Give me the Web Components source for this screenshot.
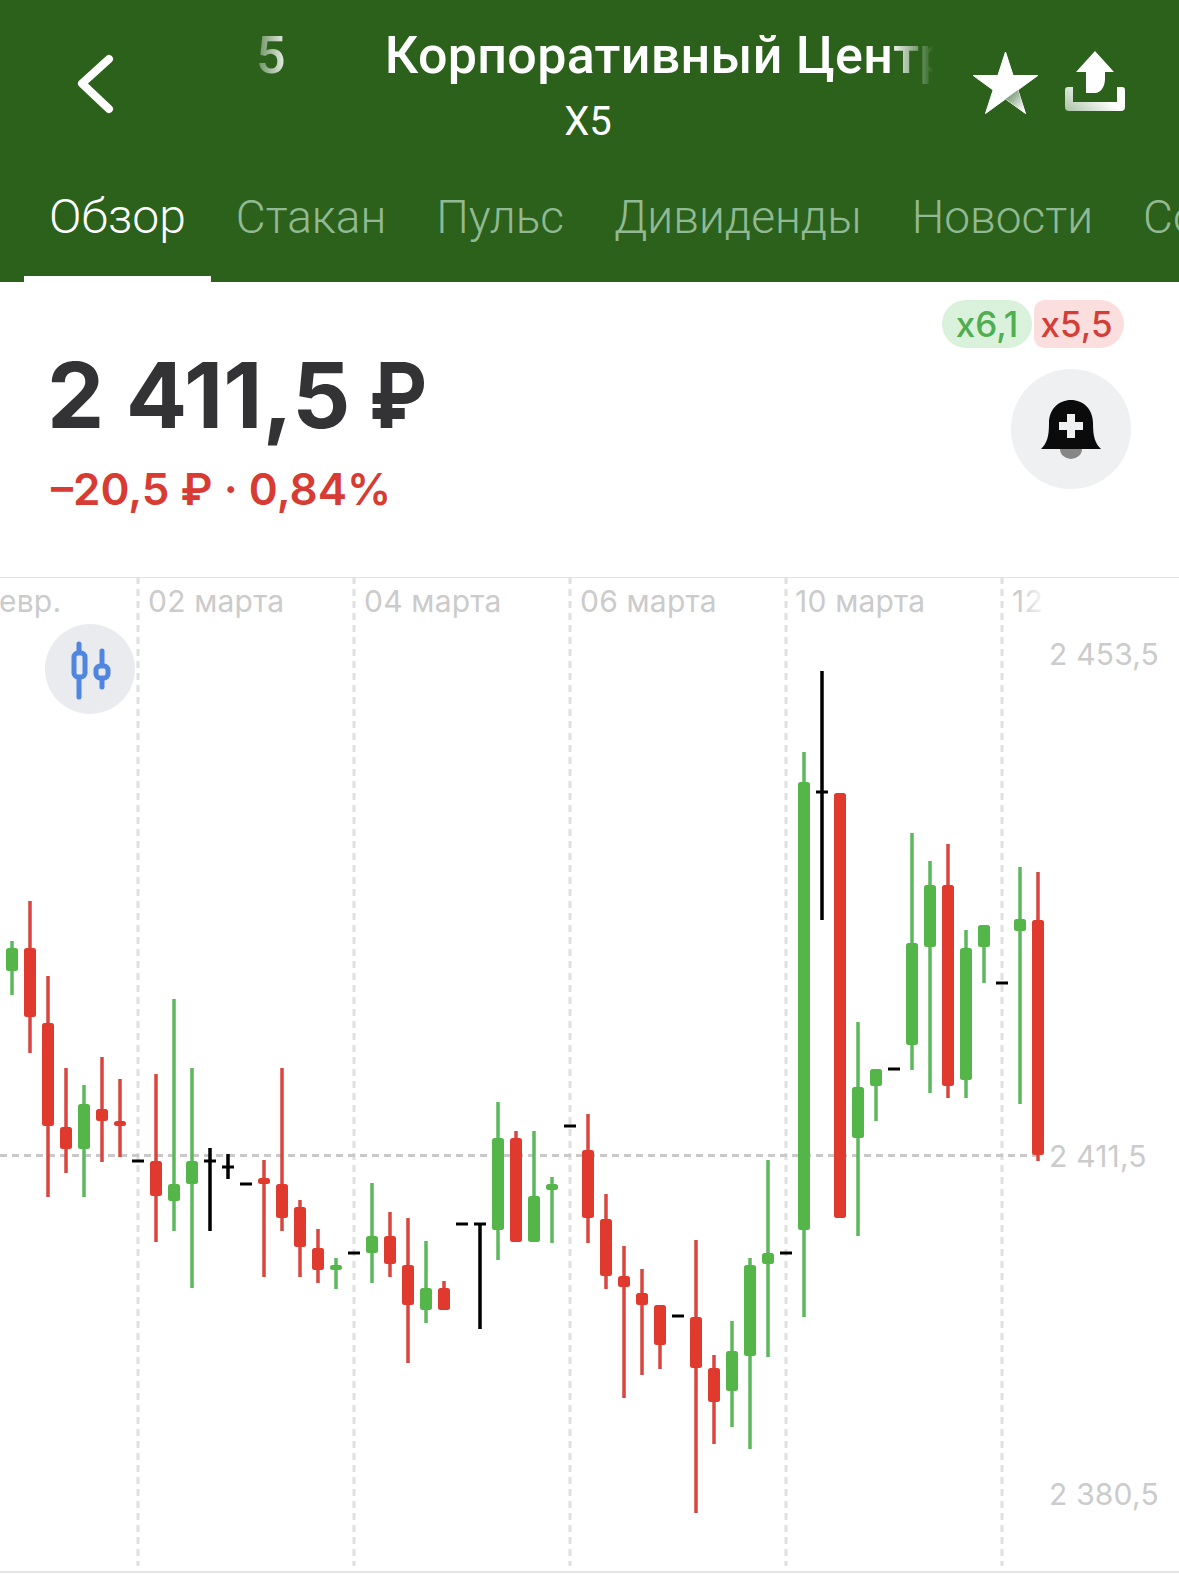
<!DOCTYPE html>
<html lang="ru">
<head>
<meta charset="utf-8">
<title>X5</title>
<style>
    html, body { margin: 0; padding: 0; background: #fff; }
    body { width: 1179px; height: 1575px; overflow: hidden; font-family: Inter, "Noto Sans", sans-serif; }
</style>
</head>
<body>
<stock-screen>
    <stock-header title-text="Корпоративный Центр" ticker="Х5" tail="5"></stock-header>
    <stock-quote price="2 411,5" currency="₽" change="–20,5 ₽ · 0,84%" buy="x6,1" sell="x5,5"></stock-quote>
    <candle-chart></candle-chart>
</stock-screen>

<script>
class StockScreen extends HTMLElement {
    constructor() {
        super();
        this.attachShadow({ mode: 'open' }).innerHTML = `
            <style>
                :host { display: flex; flex-direction: column; width: 1179px; height: 1575px; background: #fff; }
            </style>
            <slot></slot>
        `;
    }
}

const headerTemplate = document.createElement('template');
headerTemplate.innerHTML = `
    <style>
        :host {
            display: block;
            height: 282px;
            background: #2b611b;
            color: #fff;
            font-family: Roboto, sans-serif;
            overflow: hidden;
        }
        .top {
            display: flex;
            align-items: flex-start;
            height: 176px;
        }
        .back { width: 230px; flex: none; }
        .back svg { display: block; margin: 48px 0 0 72px; }
        .middle { width: 706px; flex: none; display: flex; flex-direction: column; }
        .marquee {
            display: flex;
            gap: 99px;
            padding: 27px 0 0 26px;
            height: 58px;
            font-size: 52px;
            letter-spacing: 0.3px;
            line-height: 58px;
            font-weight: 500;
            white-space: nowrap;
            overflow: hidden;
            -webkit-mask-image: linear-gradient(90deg, transparent 14px, #000 60px, #000 660px, transparent 704px);
            mask-image: linear-gradient(90deg, transparent 14px, #000 60px, #000 660px, transparent 704px);
        }
        .ticker {
            text-align: center;
            font-size: 40px;
            line-height: 44px;
            margin: 15px 0 0 0;
            padding-left: 10px;
        }
        .actions { display: flex; gap: 23px; padding: 48px 0 0 35px; }
        .actions svg { display: block; }
        .tabs {
            display: flex;
            gap: 50px;
            padding: 0 0 0 24px;
            height: 106px;
            white-space: nowrap;
            font-size: 46px;
            font-weight: 300;
        }
        .tab {
            color: #92b993;
            line-height: 70px;
            padding-top: 6px;
            height: 100px;
        }
        .tab.on {
            color: #fff;
            font-size: 48px;
            padding: 6px 25px 0 25px;
            margin-right: -25px;
            border-bottom: 6px solid #fff;
            height: 94px;
        }
    </style>
    <div class="top">
        <div class="back">
            <svg width="50" height="70" viewBox="0 0 50 70"><path d="M37 11 L10 35.5 L37 61" fill="none" stroke="#fff" stroke-width="8" stroke-linecap="round" stroke-linejoin="round"/></svg>
        </div>
        <div class="middle">
            <div class="marquee"><span class="tail"></span><span class="name"></span></div>
            <div class="ticker"></div>
        </div>
        <div class="actions">
            <svg width="70" height="70" viewBox="0 0 70 70">
                <defs><linearGradient id="starFade" gradientUnits="userSpaceOnUse" x1="37" y1="49" x2="52" y2="63"><stop offset="0" stop-color="#7fa07c"/><stop offset="1" stop-color="#fff"/></linearGradient></defs>
                <path d="M34.5 4 L42.1 27.5 L66.8 27.5 L46.9 42 L54.5 65.5 L34.5 51 L14.5 65.5 L22.1 42 L2.2 27.5 L26.9 27.5 Z" fill="#fff" stroke="#fff" stroke-width="1" stroke-linejoin="round"/>
                <path d="M34.5 51 L46.9 42 L54.5 65.5 Z" fill="url(#starFade)"/>
            </svg>
            <svg width="62" height="64" viewBox="0 0 62 64">
                <defs><linearGradient id="trayFade" x1="0" y1="1" x2="0.75" y2="0.6"><stop offset="0" stop-color="#a9c2a5"/><stop offset="1" stop-color="#fff"/></linearGradient></defs>
                <path d="M31 3 L50 24 L41 24 L41 31 C41 38 37 45 31 45 L22 45 L22 24 L12 24 Z" fill="#fff"/>
                <path d="M1 42 Q1 39 4 39 L9 39 L9 54 L53 54 L53 39 L58 39 Q61 39 61 42 L61 59 Q61 63 57 63 L5 63 Q1 63 1 59 Z" fill="url(#trayFade)"/>
            </svg>
        </div>
    </div>
    <div class="tabs">
        <div class="tab on">Обзор</div>
        <div class="tab">Стакан</div>
        <div class="tab">Пульс</div>
        <div class="tab">Дивиденды</div>
        <div class="tab">Новости</div>
        <div class="tab">События</div>
    </div>
`;

class StockHeader extends HTMLElement {
    constructor() {
        super();
        this._shadowRoot = this.attachShadow({ mode: 'open' });
        this._shadowRoot.appendChild(headerTemplate.content.cloneNode(true));
    }

    connectedCallback() {
        this._shadowRoot.querySelector('.tail').textContent = this.getAttribute('tail');
        this._shadowRoot.querySelector('.name').textContent = this.getAttribute('title-text');
        this._shadowRoot.querySelector('.ticker').textContent = this.getAttribute('ticker');
    }
}

const quoteTemplate = document.createElement('template');
quoteTemplate.innerHTML = `
    <style>
        :host {
            display: flex;
            justify-content: space-between;
            height: 295px;
            box-sizing: border-box;
            padding: 18px 48px 0 47px;
            font-family: Inter, sans-serif;
        }
        .price {
            display: flex;
            align-items: baseline;
            gap: 19px;
            font-size: 91px;
            line-height: 106px;
            font-weight: 700;
            color: #333335;
            margin-top: 42px;
            white-space: nowrap;
        }
        .currency { display: inline-block; transform: scaleX(0.86); transform-origin: left; }
        .change {
            font-size: 44px;
            line-height: 50px;
            font-weight: 600;
            color: #d83b33;
            margin: 16px 0 0 4px;
            white-space: nowrap;
        }
        .side { display: flex; flex-direction: column; align-items: flex-end; }
        .pills { display: flex; gap: 2px; margin-right: 7px; }
        .pill {
            width: 90px;
            height: 48px;
            display: flex;
            align-items: center;
            justify-content: center;
            font-size: 35px;
            font-weight: 500;
            border-radius: 24px;
        }
        .buy { background: #daf1dc; color: #4fae50; position: relative; box-shadow: 0 0 0 2px #fff; }
        .sell {
            background: #fbdfdf;
            color: #d33f38;
            border-radius: 10px 24px 24px 10px;
            box-sizing: border-box;
            padding-right: 5px;
        }
        .bell {
            width: 120px;
            height: 120px;
            margin-top: 21px;
            border-radius: 50%;
            background: #eff0f2;
            display: flex;
            align-items: center;
            justify-content: center;
        }
        .bell svg { display: block; }
    </style>
    <div class="info">
        <div class="price"><span class="value"></span><span class="currency"></span></div>
        <div class="change"></div>
    </div>
    <div class="side">
        <div class="pills"><div class="pill buy"></div><div class="pill sell"></div></div>
        <div class="bell">
            <svg width="60" height="60" viewBox="0 0 60 60">
                <path d="M19 50 A11 10 0 0 0 41 50 Z" fill="#868686"/>
                <path d="M0 50 C6 44 8 38 8 24 C8 10 18 1 30 1 C42 1 52 10 52 24 C52 38 54 44 60 50 Z" fill="#0b0b0b"/>
                <path d="M26 15 H34 V23 H42 V31 H34 V39 H26 V31 H18 V23 H26 Z" fill="#eff0f2"/>
            </svg>
        </div>
    </div>
`;

class StockQuote extends HTMLElement {
    constructor() {
        super();
        this._shadowRoot = this.attachShadow({ mode: 'open' });
        this._shadowRoot.appendChild(quoteTemplate.content.cloneNode(true));
    }

    connectedCallback() {
        this._shadowRoot.querySelector('.value').textContent = this.getAttribute('price');
        this._shadowRoot.querySelector('.currency').textContent = this.getAttribute('currency');
        this._shadowRoot.querySelector('.change').textContent = this.getAttribute('change');
        this._shadowRoot.querySelector('.buy').textContent = this.getAttribute('buy');
        this._shadowRoot.querySelector('.sell').textContent = this.getAttribute('sell');
    }
}

// x, wick top, wick bottom, body top, body bottom, kind
const CANDLES = [
    [12, 941, 995, 948, 971, 'g'],
    [30, 901, 1053, 948, 1017, 'r'],
    [48, 976, 1197, 1023, 1126, 'r'],
    [66, 1068, 1173, 1127, 1149, 'r'],
    [84, 1085, 1197, 1104, 1149, 'g'],
    [102, 1057, 1162, 1109, 1121, 'r'],
    [120, 1079, 1157, 1121, 1126, 'r'],
    [156, 1074, 1242, 1161, 1196, 'r'],
    [174, 999, 1231, 1184, 1201, 'g'],
    [192, 1068, 1288, 1161, 1184, 'g'],
    [264, 1160, 1277, 1178, 1184, 'r'],
    [282, 1068, 1231, 1184, 1218, 'r'],
    [300, 1200, 1277, 1207, 1247, 'r'],
    [318, 1229, 1283, 1248, 1270, 'r'],
    [336, 1258, 1289, 1265, 1270, 'g'],
    [372, 1183, 1283, 1236, 1253, 'g'],
    [390, 1212, 1277, 1236, 1264, 'r'],
    [408, 1218, 1363, 1265, 1305, 'r'],
    [426, 1241, 1323, 1288, 1310, 'g'],
    [444, 1281, 1310, 1288, 1310, 'r'],
    [498, 1102, 1260, 1138, 1230, 'g'],
    [516, 1131, 1242, 1138, 1242, 'r'],
    [534, 1131, 1242, 1196, 1242, 'g'],
    [552, 1177, 1243, 1184, 1190, 'g'],
    [588, 1114, 1243, 1150, 1218, 'r'],
    [606, 1194, 1289, 1219, 1276, 'r'],
    [624, 1246, 1398, 1276, 1287, 'r'],
    [642, 1269, 1375, 1293, 1305, 'r'],
    [660, 1305, 1369, 1305, 1345, 'r'],
    [696, 1240, 1513, 1317, 1368, 'r'],
    [714, 1355, 1444, 1368, 1402, 'r'],
    [732, 1321, 1427, 1351, 1391, 'g'],
    [750, 1258, 1449, 1265, 1356, 'g'],
    [768, 1160, 1357, 1253, 1264, 'g'],
    [804, 752, 1317, 782, 1230, 'g'],
    [840, 793, 1218, 793, 1218, 'r'],
    [858, 1022, 1236, 1087, 1138, 'g'],
    [876, 1069, 1121, 1069, 1086, 'g'],
    [912, 833, 1070, 943, 1045, 'g'],
    [930, 861, 1093, 885, 947, 'g'],
    [948, 844, 1098, 885, 1086, 'r'],
    [966, 930, 1098, 948, 1080, 'g'],
    [984, 925, 983, 925, 947, 'g'],
    [1020, 867, 1104, 919, 931, 'g'],
    [1038, 872, 1161, 920, 1155, 'r'],
];

const DOJIS = [
    [138, 1161], [210, 1161, 1148, 1231], [228, 1167, 1154, 1179], [246, 1184],
    [354, 1253], [462, 1224], [480, 1224, 1224, 1329], [570, 1126], [678, 1316],
    [786, 1253], [822, 792, 671, 920], [894, 1069], [1002, 983],
];

const GRID_X = [138, 354, 570, 786, 1002];
const DATES = [[-1, 'евр.'], [148, '02 марта'], [364, '04 марта'], [580, '06 марта'], [795, '10 марта']];
const PRICES = [[665, '2 453,5'], [1167, '2 411,5'], [1505, '2 380,5']];
const WICK = { g: '#5cb85c', r: '#d9453f' };
const BODY = { g: '#54b548', r: '#e03a2f' };

class CandleChart extends HTMLElement {
    constructor() {
        super();
        this.attachShadow({ mode: 'open' }).innerHTML = `
            <style>
                :host { display: block; position: relative; height: 998px; overflow: hidden; }
                svg.plot { display: block; }
                text { font-family: Inter, sans-serif; font-size: 30px; letter-spacing: 0.2px; fill: #cbcbcb; }
                .mode {
                    position: absolute;
                    left: 45px;
                    top: 47px;
                    width: 90px;
                    height: 90px;
                    border-radius: 50%;
                    background: #e9ebef;
                }
            </style>
            <svg class="plot" width="1179" height="998" viewBox="0 577 1179 998">${this._plot()}</svg>
            <div class="mode">
                <svg width="90" height="90" viewBox="45 624 90 90">
                    <path d="M79 644 V697 M102 651 V687" stroke="#5085e0" stroke-width="5" stroke-linecap="round"/>
                    <rect x="74" y="653" width="11" height="24" rx="4" fill="#e9ebef" stroke="#5085e0" stroke-width="5"/>
                    <rect x="96" y="666" width="12" height="12" rx="4" fill="#e9ebef" stroke="#5085e0" stroke-width="5"/>
                </svg>
            </div>
        `;
    }

    _plot() {
        let out = '<defs><linearGradient id="lastFade"><stop offset="0.2" stop-color="#cbcbcb"/><stop offset="1" stop-color="#f4f4f4"/></linearGradient></defs>';
        out += '<rect x="0" y="577" width="1179" height="1" fill="#e2e2e2"/>';
        out += '<rect x="0" y="1571" width="1179" height="2" fill="#e4e4e4"/>';
        GRID_X.forEach((x) => {
            out += `<line x1="${x}" y1="577" x2="${x}" y2="1566" stroke="#e0e0e0" stroke-width="3" stroke-dasharray="7 5"/>`;
        });
        out += '<line x1="0" y1="1155.5" x2="1040" y2="1155.5" stroke="#c9c9c9" stroke-width="3" stroke-dasharray="7 5"/>';
        CANDLES.forEach(([x, wickTop, wickBottom, top, bottom, kind]) => {
            out += `<rect x="${x - 1.75}" y="${wickTop}" width="3.5" height="${wickBottom - wickTop}" fill="${WICK[kind]}"/>`;
            out += `<rect x="${x - 6}" y="${top}" width="12" height="${bottom - top}" rx="2.5" fill="${BODY[kind]}"/>`;
        });
        DOJIS.forEach(([x, level, wickTop, wickBottom]) => {
            out += `<rect x="${x - 6}" y="${level - 1.5}" width="12" height="3" fill="#000"/>`;
            if (wickTop !== undefined) {
                out += `<rect x="${x - 1.75}" y="${wickTop}" width="3.5" height="${wickBottom - wickTop}" fill="#000"/>`;
            }
        });
        DATES.forEach(([x, label]) => {
            out += `<text x="${x}" y="612">${label}</text>`;
        });
        out += '<text x="1012" y="612" style="fill:url(#lastFade)">12</text>';
        PRICES.forEach(([y, label]) => {
            out += `<text x="1049" y="${y}">${label}</text>`;
        });
        return out;
    }
}

customElements.define('stock-screen', StockScreen);
customElements.define('stock-header', StockHeader);
customElements.define('stock-quote', StockQuote);
customElements.define('candle-chart', CandleChart);
</script>
</body>
</html>
